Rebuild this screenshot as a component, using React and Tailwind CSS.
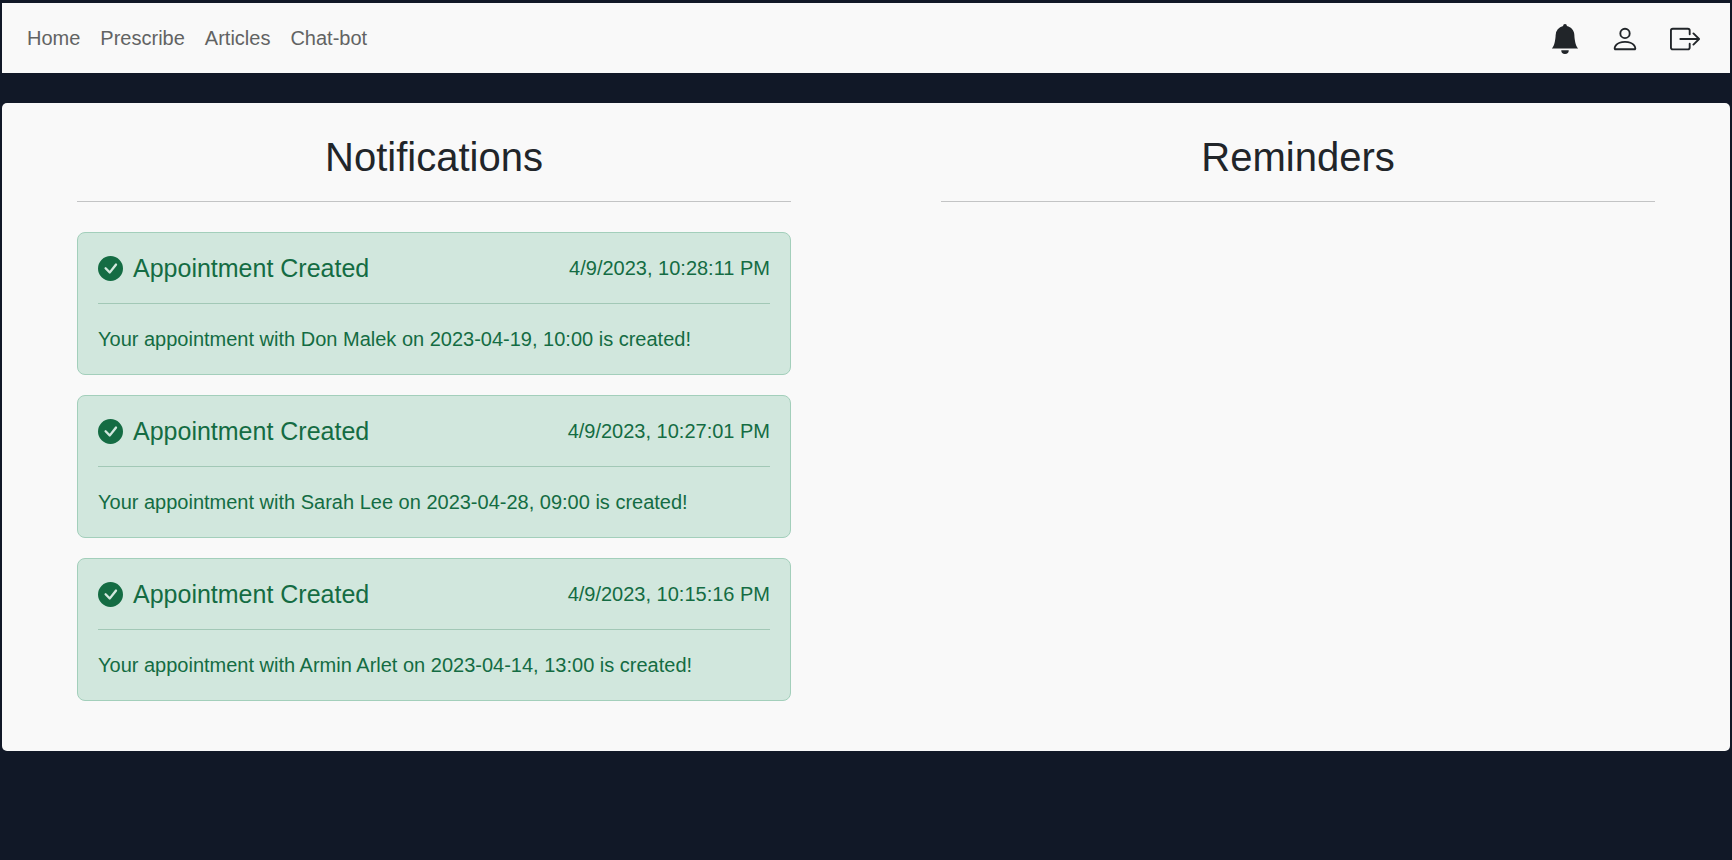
import { BsBellFill, BsPerson, BsBoxArrowRight, BsCheckCircleFill } from "react-icons/bs";

const links = ["Home", "Prescribe", "Articles", "Chat-bot"];

const notifications = [
  { time: "4/9/2023, 10:28:11 PM", text: "Your appointment with Don Malek on 2023-04-19, 10:00 is created!" },
  { time: "4/9/2023, 10:27:01 PM", text: "Your appointment with Sarah Lee on 2023-04-28, 09:00 is created!" },
  { time: "4/9/2023, 10:15:16 PM", text: "Your appointment with Armin Arlet on 2023-04-14, 13:00 is created!" },
];

function Navbar() {
  return (
    <nav className="flex h-[70px] items-center justify-between bg-[#f9f9f9] pr-[30px] pl-[25px]">
      <ul className="flex gap-5">
        {links.map((link) => (
          <li key={link}>
            <a href="#" className="text-[#626363]">{link}</a>
          </li>
        ))}
      </ul>
      <div className="flex items-center gap-[30px] pt-0.5">
        <button type="button" aria-label="Notifications"><BsBellFill size={30} /></button>
        <button type="button" aria-label="Profile"><BsPerson size={30} /></button>
        <button type="button" aria-label="Log out"><BsBoxArrowRight size={30} /></button>
      </div>
    </nav>
  );
}

function NotificationCard({ time, text }) {
  return (
    <article className="rounded-lg border border-[#a3cfbb] bg-[#d1e7dd] p-5 text-[#146c43]">
      <header className="flex h-[30px] items-center justify-between">
        <h2 className="flex items-center gap-[10px] text-[25px] leading-[30px]">
          <BsCheckCircleFill size={25} />
          Appointment Created
        </h2>
        <time>{time}</time>
      </header>
      <hr className="my-5 border-[#a2c8b6]" />
      <p>{text}</p>
    </article>
  );
}

function Column({ title, children }) {
  return (
    <section className="px-[75px]">
      <h1 className="text-center text-[40px] leading-[48px]">{title}</h1>
      <hr className="mt-5 mb-[30px] border-[#c3c4c5]" />
      <div className="flex flex-col gap-5">{children}</div>
    </section>
  );
}

export default function App() {
  return (
    <div className="min-h-screen bg-[#111827] px-[2px] pt-[3px] font-['Liberation_Sans',Arial,sans-serif] text-[20px] leading-[30px] text-[#212529]">
      <Navbar />
      <main className="mt-[30px] grid grid-cols-2 rounded-[5px] bg-[#f9f9f9] pt-[30px] pb-[50px]">
        <Column title="Notifications">
          {notifications.map((item) => (
            <NotificationCard key={item.time} {...item} />
          ))}
        </Column>
        <Column title="Reminders" />
      </main>
    </div>
  );
}
